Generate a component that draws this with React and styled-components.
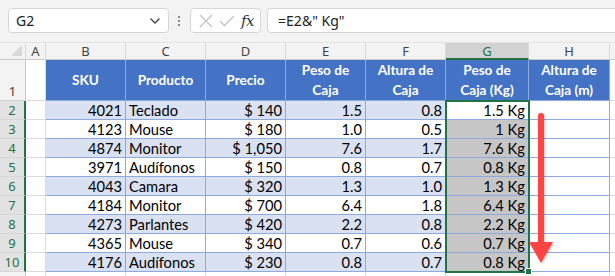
import React from "react"
import styled, { createGlobalStyle } from "styled-components"

const GlobalStyle = createGlobalStyle`
	html, body {
		margin: 0;
		padding: 0;
		background: #fff;
		overflow: hidden;
	}
	body {
		font-family: Lato, "Liberation Sans", sans-serif;
	}
`

const COLS = [26, 20, 80, 80, 80, 80, 80, 83, 81, 40]
const GREEN = "#217346"

const Page = styled.div`
	width: 615px;
	height: 276px;
	position: relative;
	overflow: hidden;
`

const Toolbar = styled.div`
	height: 42px;
	background: #f3f3f3;
	display: flex;
	align-items: flex-start;
	padding: 8px 0 0 8px;
	box-sizing: border-box;
`

const Box = styled.div`
	height: 25px;
	box-sizing: border-box;
	background: #fff;
	border: 1px solid #d6d6d6;
	border-radius: 4px;
	display: flex;
	align-items: center;
	font-family: "Noto Sans", "Open Sans", sans-serif;
	font-size: 14px;
	color: #222;
`

const NameBox = styled(Box)`
	width: 166px;
	padding: 0 7px;
	justify-content: space-between;
`

const Dots = styled.div`
	width: 22px;
	height: 25px;
	display: flex;
	flex-direction: column;
	align-items: center;
	justify-content: center;
	gap: 2px;

	i {
		width: 2px;
		height: 2px;
		background: #8a8a8a;
		display: block;
	}
`

const FxBox = styled(Box)`
	width: 73px;
	padding: 0 6px 0 8px;
	justify-content: space-between;
`

const Fx = styled.span`
	font-family: "DejaVu Serif", "Liberation Serif", serif;
	font-style: italic;
	font-size: 15px;
	color: #333;
	letter-spacing: -0.5px;
`

const FormulaBox = styled(Box)`
	width: 360px;
	margin-left: 6px;
	padding-left: 10px;
	border-right: none;
	border-radius: 4px 0 0 4px;
`

const Grid = styled.div`
	display: grid;
	grid-template-columns: ${COLS.map((c) => c + "px").join(" ")};
	grid-template-rows: 18px 41px repeat(9, 19px) 19px;
	position: relative;
`

const ColHead = styled.div`
	box-sizing: border-box;
	background: ${({ $sel }) => ($sel ? "#d2d2d2" : "#f3f3f3")};
	color: ${({ $sel }) => ($sel ? GREEN : "#444")};
	border-right: 1px solid #dadada;
	border-bottom: ${({ $sel }) => ($sel ? `2px solid ${GREEN}` : "1px solid #c8c8c8")};
	border-top: 1px solid #e4e4e4;
	display: flex;
	align-items: center;
	justify-content: center;
	font-family: "Noto Sans", "Open Sans", sans-serif;
	font-size: 13px;
	position: relative;
`

const Corner = styled(ColHead)`
	&:after {
		content: "";
		position: absolute;
		right: 3px;
		bottom: 3px;
		border-left: 11px solid transparent;
		border-bottom: 11px solid #d9d9d9;
	}
`

const RowHead = styled.div`
	box-sizing: border-box;
	background: ${({ $sel }) => ($sel ? "#e2e2e2" : "#f3f3f3")};
	color: ${({ $sel }) => ($sel ? GREEN : "#444")};
	border-bottom: 1px solid #d6d6d6;
	border-right: ${({ $sel }) => ($sel ? `2px solid ${GREEN}` : "1px solid #c8c8c8")};
	display: flex;
	align-items: flex-end;
	justify-content: center;
	font-family: "Noto Sans", "Open Sans", sans-serif;
	font-size: 13px;
	line-height: 18px;
`

const Cell = styled.div`
	box-sizing: border-box;
	background: ${({ $bg }) => $bg || "#fff"};
	border-right: 1px solid ${({ $line }) => $line || "#8ea9db"};
	border-bottom: 1px solid ${({ $line }) => $line || "#8ea9db"};
	display: flex;
	align-items: flex-end;
	justify-content: ${({ $align }) => ($align === "left" ? "flex-start" : "flex-end")};
	padding: 0 3px;
	font-size: 14.7px;
	line-height: 18px;
	color: #000;
	white-space: nowrap;
	overflow: hidden;
`

const HeadCell = styled.div`
	box-sizing: border-box;
	background: #4472c4;
	color: #fff;
	font-weight: 700;
	font-size: 13.6px;
	line-height: 20px;
	text-align: center;
	display: flex;
	align-items: center;
	justify-content: center;
	border-right: 1px solid #8ea9db;
	border-bottom: 1px solid #8ea9db;
`

const Selection = styled.div`
	position: absolute;
	left: 445px;
	top: 58px;
	width: 85px;
	height: 173px;
	border: 2px solid ${GREEN};
	box-sizing: border-box;
	pointer-events: none;
`

const Handle = styled.div`
	position: absolute;
	left: 525px;
	top: 226px;
	width: 7px;
	height: 7px;
	background: ${GREEN};
	border: 1px solid #fff;
	box-sizing: border-box;
`

const Arrow = styled.svg`
	position: absolute;
	left: 522px;
	top: 108px;
	filter: drop-shadow(1px 1px 1px rgba(0, 0, 0, 0.25));
`

const headers = [
	"SKU",
	"Producto",
	"Precio",
	["Peso de", "Caja"],
	["Altura de", "Caja"],
	["Peso de", "Caja (Kg)"],
	["Altura de", "Caja (m)"],
]

const rows = [
	[4021, "Teclado", "$ 140", "1.5", "0.8", "1.5 Kg"],
	[4123, "Mouse", "$ 180", "1.0", "0.5", "1 Kg"],
	[4874, "Monitor", "$ 1,050", "7.6", "1.7", "7.6 Kg"],
	[3971, "Audífonos", "$ 150", "0.8", "0.7", "0.8 Kg"],
	[4043, "Camara", "$ 320", "1.3", "1.0", "1.3 Kg"],
	[4184, "Monitor", "$ 700", "6.4", "1.8", "6.4 Kg"],
	[4273, "Parlantes", "$ 420", "2.2", "0.8", "2.2 Kg"],
	[4365, "Mouse", "$ 340", "0.7", "0.6", "0.7 Kg"],
	[4176, "Audífonos", "$ 230", "0.8", "0.7", "0.8 Kg"],
]

const Chevron = () => (
	<svg width="12" height="8" viewBox="0 0 12 8">
		<path d="M1.5 1.5 L6 6 L10.5 1.5" fill="none" stroke="#444" strokeWidth="1.3" />
	</svg>
)

const Cross = () => (
	<svg width="14" height="14" viewBox="0 0 14 14">
		<path d="M1 1 L13 13 M13 1 L1 13" stroke="#c3c3c3" strokeWidth="1.3" />
	</svg>
)

const Check = () => (
	<svg width="16" height="12" viewBox="0 0 16 12">
		<path d="M1 6 L5.5 10.5 L15 1" fill="none" stroke="#c3c3c3" strokeWidth="1.3" />
	</svg>
)

export default function App() {
	const letters = ["A", "B", "C", "D", "E", "F", "G", "H", ""]
	return (
		<Page>
			<GlobalStyle />
			<Toolbar>
				<NameBox>
					<span>G2</span>
					<Chevron />
				</NameBox>
				<Dots>
					<i />
					<i />
					<i />
				</Dots>
				<FxBox>
					<Cross />
					<Check />
					<Fx>fx</Fx>
				</FxBox>
				<FormulaBox>=E2&amp;" Kg"</FormulaBox>
			</Toolbar>
			<Grid>
				<Corner />
				{letters.map((l, i) => (
					<ColHead key={i} $sel={l === "G"}>
						{l}
					</ColHead>
				))}

				<RowHead>1</RowHead>
				<Cell $line="#dcdcdc" />
				{headers.map((h, i) => (
					<HeadCell key={i}>
						{Array.isArray(h) ? (
							<span>
								{h[0]}
								<br />
								{h[1]}
							</span>
						) : (
							h
						)}
					</HeadCell>
				))}
				<Cell $line="#dcdcdc" />

				{rows.map((r, i) => {
					const band = i % 2 === 0 ? "#d9e1f2" : "#fff"
					return (
						<React.Fragment key={i}>
							<RowHead $sel>{i + 2}</RowHead>
							<Cell $line="#dcdcdc" />
							<Cell $bg={band}>{r[0]}</Cell>
							<Cell $bg={band} $align="left">
								{r[1]}
							</Cell>
							<Cell $bg={band}>{r[2]}</Cell>
							<Cell $bg={band}>{r[3]}</Cell>
							<Cell $bg={band}>{r[4]}</Cell>
							<Cell $bg={i === 0 ? "#fff" : "#c6c6c6"}>{r[5]}</Cell>
							<Cell />
							<Cell $line="#dcdcdc" />
						</React.Fragment>
					)
				})}

				<RowHead />
				{COLS.slice(1).map((c, i) => (
					<Cell key={i} $line="#dcdcdc" />
				))}

				<Selection />
				<Handle />
			</Grid>
			<Arrow width="40" height="160" viewBox="0 0 40 160">
				<line x1="19" y1="8" x2="19" y2="140" stroke="#ff4444" strokeWidth="6" strokeLinecap="round" />
				<polygon points="7,134 31,134 19,155" fill="#ff4444" />
			</Arrow>
		</Page>
	)
}
